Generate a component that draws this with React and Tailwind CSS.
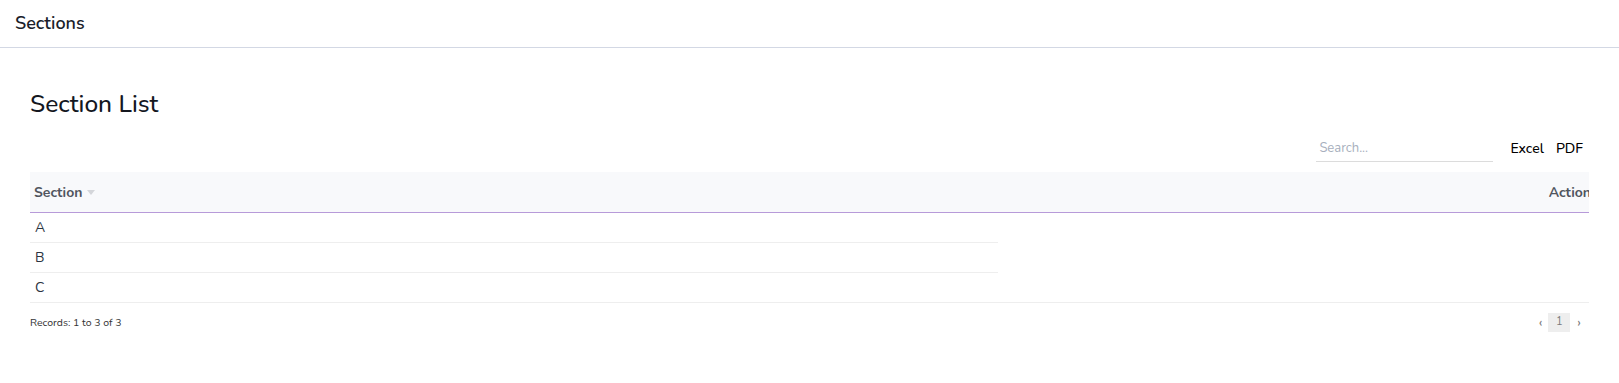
import React from "react";

const rows = ["A", "B", "C"];

const App = () => {
  return (
    <div className="w-full min-h-screen bg-white text-[#212529] font-['Nunito','Lato','Noto_Sans',sans-serif]">
      <div className="h-[48px] border-b border-[#d3d8e4] flex items-center px-[15px]">
        <h1 className="text-[18px] font-semibold text-[#1b1e2b]">Sections</h1>
      </div>

      <div className="px-[30px] pt-[40px]">
        <h2 className="text-[24.5px] leading-[32px] font-medium text-[#14171f]">
          Section List
        </h2>

        <div className="flex items-center justify-end mt-[14px] pr-[6px] h-[28px]">
          <input
            type="text"
            placeholder="Search..."
            className="w-[177px] h-[28px] border-b border-[#dcdcdc] px-[3px] text-[13px] placeholder:text-[#a7afbd] focus:outline-none"
          />
          <button className="ml-[17px] text-[14px] font-medium text-black">Excel</button>
          <button className="ml-[12px] text-[14px] font-medium text-black">PDF</button>
        </div>

        <div className="overflow-hidden mt-[10px]">
          <div className="w-[1561px]">
            <div className="flex items-center h-[41px] bg-[#f8f9fb] border-b border-[#b79ad9] text-[14px] font-bold text-[#50555e]">
              <div className="pl-[4px] flex items-center gap-[5px]">
                Section
                <span className="w-0 h-0 border-l-[4px] border-r-[4px] border-t-[5px] border-l-transparent border-r-transparent border-t-[#d4d6da]" />
              </div>
              <div className="ml-auto">Action</div>
            </div>
            {rows.map((r, i) => (
              <div
                key={r}
                className={
                  i === rows.length - 1
                    ? "flex border-b border-[#eeeeee]"
                    : "flex"
                }
              >
                <div
                  className={
                    i === rows.length - 1
                      ? "w-[968px] h-[29px] flex items-center pl-[5px] text-[14px] text-[#2b3340]"
                      : "w-[968px] h-[30px] flex items-center pl-[5px] text-[14px] text-[#2b3340] border-b border-[#eeeeee]"
                  }
                >
                  {r}
                </div>
              </div>
            ))}
          </div>
        </div>

        <div className="flex items-center mt-[10px] w-[1559px]">
          <div className="text-[10.5px] text-[#333]">Records: 1 to 3 of 3</div>
          <div className="ml-auto flex items-center text-[11px] text-[#7a7a7a] pr-[8px]">
            <span className="mr-[6px] text-[14px] leading-none">‹</span>
            <span className="w-[22px] h-[19px] bg-[#eeeeee] flex items-center justify-center">1</span>
            <span className="ml-[7px] text-[14px] leading-none">›</span>
          </div>
        </div>
      </div>
    </div>
  );
};

export default App;
